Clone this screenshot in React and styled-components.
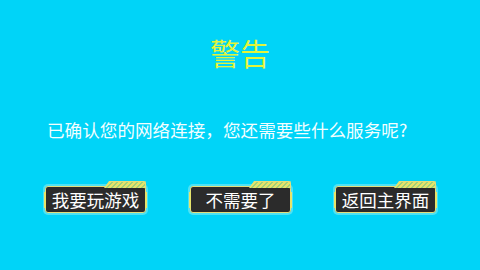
import React from "react";
import styled, { createGlobalStyle } from "styled-components";

const Global = createGlobalStyle`
  html, body {
    margin: 0;
    padding: 0;
    background: #00d4f8;
  }
  #root {
    width: 480px;
    height: 270px;
  }
`;

const Screen = styled.div`
  width: 480px;
  height: 270px;
  background: #00d4f8;
  display: flex;
  flex-direction: column;
  font-family: "Noto Sans CJK SC", "Noto Sans", sans-serif;
  overflow: hidden;
`;

const Title = styled.h1`
  margin: 0;
  padding-top: 34px;
  text-align: center;
  font-size: 30px;
  line-height: 36px;
  font-weight: 400;
  color: #e4f43a;
`;

const Message = styled.p`
  margin: 0;
  padding: 48px 0 0 47px;
  font-size: 17.6px;
  line-height: 24px;
  color: #f2feff;
`;

const Actions = styled.div`
  display: flex;
  gap: 44px;
  padding: 44px 0 0 45px;
`;

const Button = styled.button`
  position: relative;
  width: 101px;
  height: 27px;
  padding: 0;
  border: 1px solid #e2de7c;
  border-radius: 3px;
  background: #2b2b2b;
  box-shadow: 0 0 0 2px rgba(140, 236, 240, 0.55);
  color: #ffffff;
  font-family: inherit;
  font-size: 17.5px;
  line-height: 25px;
  text-align: center;
  cursor: pointer;

  /* striped tab on the top right */
  &::before {
    content: "";
    position: absolute;
    right: -1px;
    top: -6px;
    width: 40px;
    height: 6px;
    background: repeating-linear-gradient(
      -45deg,
      #e6e36a 0 2px,
      #9fd27a 2px 3.5px
    );
    border: 1px solid #e2de7c;
    border-bottom: none;
    border-radius: 2px 2px 0 0;
    clip-path: polygon(5px 0, 100% 0, 100% 100%, 0 100%);
  }

  /* yellow marker bars on the sides */
  &::after {
    content: "";
    position: absolute;
    left: -2px;
    right: -2px;
    top: 5px;
    bottom: 4px;
    border-left: 2px solid #e6e36a;
    border-right: 2px solid #e6e36a;
    pointer-events: none;
  }
`;

const actions = ["我要玩游戏", "不需要了", "返回主界面"];

const App = () => {
  return (
    <Screen>
      <Global />
      <Title>警告</Title>
      <Message>已确认您的网络连接，您还需要些什么服务呢?</Message>
      <Actions>
        {actions.map((label) => (
          <Button key={label}>{label}</Button>
        ))}
      </Actions>
    </Screen>
  );
};

export default App;
